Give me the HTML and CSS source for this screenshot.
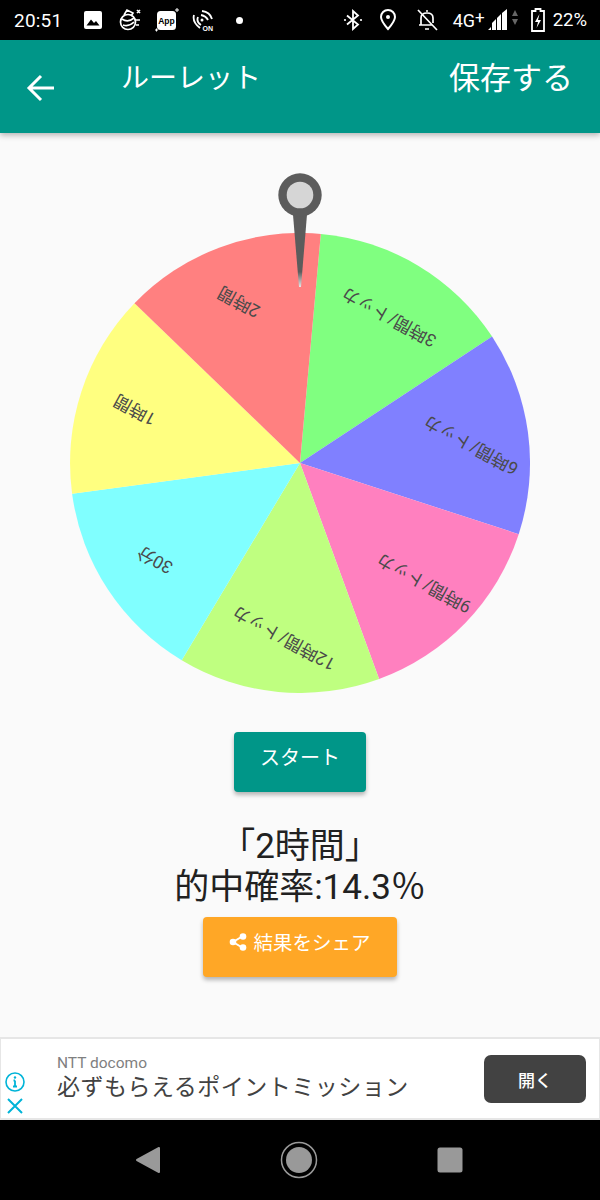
FILE: index.html
```html
<!DOCTYPE html>
<html lang="ja">
<head>
<meta charset="utf-8">
<title>ルーレット</title>
<link rel="stylesheet" href="styles.css">
</head>
<body>
<div class="screen">
  <div class="status">
    <span class="clock">20:51</span>
    <svg class="si" width="20" height="20" viewBox="0 0 20 20"><rect x="1" y="1" width="18" height="18" rx="2" fill="#fff"/><path d="M3.500 15.500 8 9.500l3 3.500 2-2 3.500 4.500z" fill="#000"/></svg>
    <svg class="si s2" width="24" height="24" viewBox="0 0 24 24" fill="none" stroke="#fff" stroke-width="1.700"><circle cx="10" cy="14" r="7.500"/><path d="M4 11q6 4 12-1M5 17q6 2 11-3M6 7l3-5 6 3-2 3M19 2l3 3M22 2l-3 3M18 12h4M18 17h3"/></svg>
    <svg class="si s3" width="24" height="24" viewBox="0 0 24 24"><rect x="2" y="3" width="19" height="19" rx="3.500" fill="#fff"/><text x="11.500" y="15.500" class="app">App</text><path d="M22 0v4M20 2h4M0 22h3M1.500 20.500v3" stroke="#fff" stroke-width="1"/></svg>
    <svg class="si s4" width="24" height="24" viewBox="0 0 24 24" fill="none" stroke="#fff" stroke-width="1.800"><path d="M11 3q8 1 10 8M10 7q5 1 7 5M3 7q-2 7 6 13M7 9q-2 5 3 8"/><circle cx="11" cy="12" r="1.500" fill="#fff" stroke="none"/><text x="11.500" y="23" class="on">ON</text></svg>
    <span class="dot"></span>
    <span class="status-gap"></span>
    <svg class="si" width="20" height="22" viewBox="0 0 20 22" fill="none" stroke="#fff" stroke-width="1.800"><path d="M4 6.500l11 9-5 4.500V2l5 4.500-11 9"/><circle cx="2" cy="11" r="1.100" fill="#fff" stroke="none"/><circle cx="18" cy="11" r="1.100" fill="#fff" stroke="none"/></svg>
    <svg class="si s6" width="18" height="22" viewBox="0 0 18 22" fill="none" stroke="#fff" stroke-width="2"><path d="M9 20Q2 12 2 8a7 7 0 0 1 14 0q0 4-7 12z"/><circle cx="9" cy="8" r="2" fill="#fff" stroke="none"/></svg>
    <svg class="si s7" width="22" height="24" viewBox="0 0 22 24" fill="none" stroke="#fff" stroke-width="1.700"><path d="M5 17V10q0-5 6-5t6 5v5M3 17h13M9 21h4M10 3h2M2 2l19 20"/></svg>
    <span class="net">4G<span class="plus">+</span></span>
    <svg class="si s8" width="30" height="22" viewBox="0 0 30 22"><path d="M0 21l3-3v3zM4 21v-7l4-4v11zM9 21V9l4-4v16zM14 21V4l5-4v21z" fill="#fff"/><path d="M27 1l3 6h-6zM24 10h6l-3 6z" fill="#666"/></svg>
    <svg class="si s9" width="14" height="26" viewBox="0 0 14 26"><path d="M4.500 4V2h5v2H13v20H1V4z" fill="none" stroke="#fff" stroke-width="1.800"/><path d="M8.500 7 4 15h3l-1.500 6L10 13H7z" fill="#fff"/></svg>
    <span class="pct">22%</span>
  </div>

  <header class="appbar">
    <svg class="back" width="30" height="28" viewBox="0 0 30 28" fill="none" stroke="#fff" stroke-width="3"><path d="M28 14H3M15 2 3 14l12 12"/></svg>
    <span class="title">ルーレット</span>
    <span class="save">保存する</span>
  </header>

  <main class="main">
    <div class="wheel-box">
      <svg class="wheel" width="460" height="460" viewBox="-230 -230 460 460">
        <path d="M0 0L20.800-229.100A230 230 0 0 1 192.100-126.500Z" fill="#80ff80"/>
        <path d="M0 0L192.100-126.500A230 230 0 0 1 218.700 71.200Z" fill="#8080ff"/>
        <path d="M0 0L218.700 71.200A230 230 0 0 1 79.100 216Z" fill="#ff80bf"/>
        <path d="M0 0L79.100 216A230 230 0 0 1-118.300 197.200Z" fill="#bfff80"/>
        <path d="M0 0L-118.300 197.200A230 230 0 0 1-227.900 30.800Z" fill="#80ffff"/>
        <path d="M0 0L-227.900 30.800A230 230 0 0 1-165.500-159.700Z" fill="#ffff80"/>
        <path d="M0 0L-165.500-159.700A230 230 0 0 1 20.800-229.100Z" fill="#ff8080"/>
        <text class="lbl" transform="translate(89 -146) rotate(209)">3時間/トッカ</text>
        <text class="lbl" transform="translate(171 -18) rotate(209)">6時間/トッカ</text>
        <text class="lbl" transform="translate(124 120) rotate(209)">9時間/トッカ</text>
        <text class="lbl" transform="translate(-16 175) rotate(209)">12時間/トッカ</text>
        <text class="lbl" transform="translate(-145 97) rotate(209)">30分</text>
        <text class="lbl" transform="translate(-165 -53) rotate(209)">1時間</text>
        <text class="lbl" transform="translate(-61 -161) rotate(209)">2時間</text>
      </svg>
      <svg class="pin" width="46" height="116" viewBox="0 0 46 116">
        <defs><linearGradient id="tip" x1="0" y1="0" x2="0" y2="1"><stop offset="0.800" stop-color="#5c5c5c"/><stop offset="1" stop-color="#e8e8e8"/></linearGradient></defs>
        <path d="M15.700 38h14.600l-6.300 76h-2z" fill="url(#tip)"/>
        <circle cx="23" cy="22" r="21.700" fill="#5c5c5c"/>
        <circle cx="23" cy="22" r="13.300" fill="#d6d6d6"/>
      </svg>
    </div>
    <button class="btn start">スタート</button>
    <div class="result">「2時間」<br>的中確率:14.3％</div>
    <button class="btn share">
      <svg width="18" height="18" viewBox="0 0 18 18"><path d="M14 3 4 9l10 6" fill="none" stroke="#fff" stroke-width="2"/><circle cx="14" cy="3.500" r="3.300" fill="#fff"/><circle cx="4" cy="9" r="3.300" fill="#fff"/><circle cx="14" cy="14.500" r="3.300" fill="#fff"/></svg>
      <span>結果をシェア</span>
    </button>
  </main>

  <aside class="ad">
    <div class="ad-icons">
      <svg width="20" height="20" viewBox="0 0 20 20" fill="none" stroke="#00b4d8" stroke-width="1.600"><circle cx="10" cy="10" r="9"/><path d="M10 8.500v6M8 14.500h4M8.500 8.500H10" stroke-width="1.800"/><circle cx="10" cy="5.500" r="1.200" fill="#00b4d8" stroke="none"/></svg>
      <svg width="16" height="16" viewBox="0 0 16 16" fill="none" stroke="#00b4d8" stroke-width="2"><path d="M1 1l14 14M15 1 1 15"/></svg>
    </div>
    <div class="ad-text">
      <div class="ad-brand">NTT docomo</div>
      <div class="ad-copy">必ずもらえるポイントミッション</div>
    </div>
    <div class="ad-open">開く</div>
  </aside>

  <nav class="navbar">
    <svg width="26" height="28" viewBox="0 0 26 28"><path d="M24 2v24L2 14z" fill="#999" stroke="#999" stroke-width="2" stroke-linejoin="round"/></svg>
    <svg width="38" height="38" viewBox="0 0 38 38"><circle cx="19" cy="19" r="17.500" fill="none" stroke="#999" stroke-width="1.500"/><circle cx="19" cy="19" r="13" fill="#999"/></svg>
    <svg width="26" height="26" viewBox="0 0 26 26"><rect x="0.500" y="0.500" width="25" height="25" rx="2.500" fill="#999"/></svg>
  </nav>
</div>
</body>
</html>
```

FILE: styles.css
```css
* { box-sizing: border-box; }
html, body { margin: 0; padding: 0; }
body { font-family: Roboto, "Noto Sans CJK JP", sans-serif; background: #000; }
.screen { width: 600px; height: 1200px; display: flex; flex-direction: column; overflow: hidden; }

.status { height: 40px; background: #000; color: #fff; display: flex; align-items: center; padding-left: 14px; font-size: 19px; flex: none; }
.clock { width: 69px; letter-spacing: 0.2px; }
.si { flex: none; display: block; }
.s2 { margin-left: 15px; }
.s3 { margin-left: 13px; }
.s4 { margin-left: 12px; }
.dot { width: 7px; height: 7px; background: #fff; border-radius: 50%; margin-left: 21px; }
.status-gap { flex: 1; }
.s6 { margin-left: 16px; }
.s7 { margin-left: 19px; }
.net { margin-left: 15px; font-size: 18px; width: 33px; white-space: nowrap; }
.plus { font-size: 17px; position: relative; top: -4px; }
.s8 { margin-left: 2px; }
.s9 { margin-left: 13px; }
.pct { margin-left: 8px; margin-right: 13px; font-size: 18.500px; }
.app { font: 700 8.500px "Liberation Sans", sans-serif; fill: #000; text-anchor: middle; }
.on { font: 700 7px "Liberation Sans", sans-serif; fill: #fff; stroke: none; }

.appbar { height: 93px; flex: none; background: #009688; color: #fff; display: flex; align-items: flex-start; box-shadow: 0 2px 6px rgba(0,0,0,.3); position: relative; z-index: 1; }
.back { margin: 34px 0 0 26px; }
.title { font-size: 28px; line-height: 40px; margin: 19px 0 0 65px; }
.save { font-size: 31px; line-height: 44px; margin: 17px 27px 0 auto; }

.main { flex: none; height: 904px; background: #fafafa; display: flex; flex-direction: column; align-items: center; padding-top: 100px; }
.wheel-box { width: 460px; height: 460px; position: relative; flex: none; }
.wheel { display: block; }
.lbl { font-size: 17.500px; fill: #4a4a4a; text-anchor: middle; dominant-baseline: central; font-family: Roboto, "Noto Sans CJK JP", sans-serif; }
.pin { position: absolute; left: 207px; top: -60px; }

.btn { border: 0; border-radius: 4px; color: #fff; font-family: inherit; font-size: 20px; display: flex; align-items: center; justify-content: center; height: 60px; padding: 0 0 11px; box-shadow: 0 3px 4px rgba(0,0,0,.28); flex: none; }
.start { width: 132px; background: #009688; margin-top: 39px; }
.result { font-size: 35px; line-height: 41px; color: #212121; text-align: center; margin-top: 34px; white-space: nowrap; }
.share { width: 194px; background: #ffa726; gap: 6px; margin-top: 9px; font-size: 19.500px; }
.share svg { flex: none; }

.ad { height: 83px; flex: none; background: #fff; border: 2px solid #e6e6e6; border-right-width: 1px; border-left-width: 1px; display: flex; }
.ad-icons { width: 56px; display: flex; flex-direction: column; align-items: center; justify-content: flex-end; gap: 6px; padding: 0 29px 4px 0; }
.ad-icons svg { flex: none; display: block; }
.ad-text { flex: 1; padding-top: 12px; }
.ad-brand { font-size: 15.500px; line-height: 24px; color: #808080; }
.ad-copy { font-size: 23px; line-height: 26px; color: #424242; letter-spacing: 0.500px; white-space: nowrap; }
.ad-open { width: 102px; height: 48px; margin: 16px 13px 0 0; background: #424242; color: #fff; border-radius: 7px; display: flex; align-items: center; justify-content: center; font-size: 17px; font-weight: 500; }

.navbar { flex: none; height: 80px; background: #000; display: flex; align-items: center; justify-content: space-between; padding: 0 137px 0 135px; }
```
